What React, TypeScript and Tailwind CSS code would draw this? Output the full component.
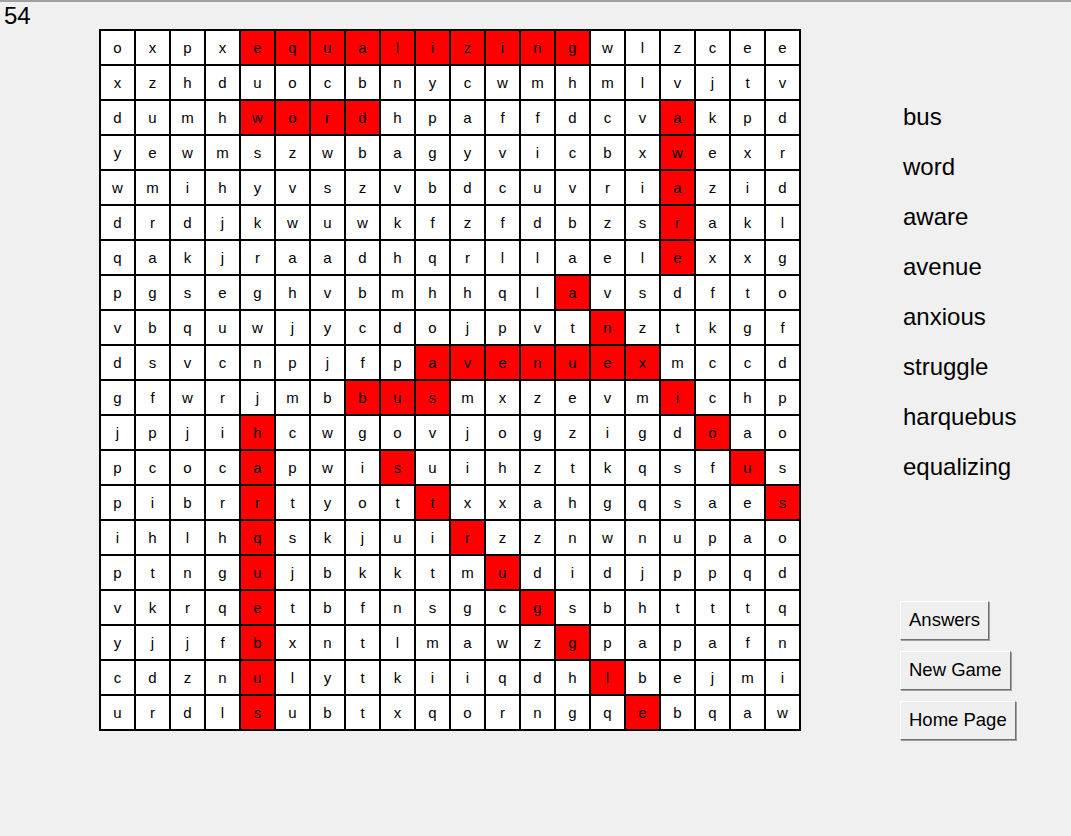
import React from "react";

const rows = [
  "oxpxequalizingwlzcee",
  "xzhduocbnycwmhmlvjtv",
  "dumhwordhpaffdcvakpd",
  "yewmszwbagyvicbxwexr",
  "wmihyvszvbdcuvriazid",
  "drdjkwuwkfzfdbzsrakl",
  "qakjraadhqrllaelexxg",
  "pgseghvbmhhqlavsdfto",
  "vbquwjycdojpvtnztkgf",
  "dsvcnpjfpavenuexmccd",
  "gfwrjmbbusmxzevmichp",
  "jpjihcwgovjogzigdoao",
  "pcocapwisuihztkqsfus",
  "pibrrtyottxxahgqsaes",
  "ihlhqskjuirzznwnupao",
  "ptngujbkktmudidjppqd",
  "vkrqetbfnsgcgsbhtttq",
  "yjjfbxntlmawzgpapafn",
  "cdznulytkiiqdhlbejmi",
  "urdlsubtxqorngqebqaw",
];

// found words, as [row, col] cells
const found: [number, number][] = [];
for (let c = 4; c <= 13; c++) found.push([0, c]); // equalizing
for (let c = 4; c <= 7; c++) found.push([2, c]); // word
for (let r = 2; r <= 6; r++) found.push([r, 16]); // aware
for (let c = 9; c <= 15; c++) found.push([9, c]); // avenue
for (let c = 7; c <= 9; c++) found.push([10, c]); // bus
for (let i = 0; i < 7; i++) found.push([7 + i, 13 + i]); // anxious
for (let i = 0; i < 8; i++) found.push([12 + i, 8 + i]); // struggle
for (let r = 11; r <= 19; r++) found.push([r, 4]); // harquebus

const hit = new Set(found.map(([r, c]) => r * 20 + c));

const words = ["bus", "word", "aware", "avenue", "anxious", "struggle", "harquebus", "equalizing"];

function Btn({ label }: { label: string }) {
  return (
    <button className="h-[39px] px-[8px] bg-[#efefef] border border-t-white border-l-white border-b-[#707070] border-r-[#707070] shadow-[1px_1px_0_#a0a0a0] text-[18.5px] text-black leading-none self-start">
      {label}
    </button>
  );
}

export default function App() {
  return (
    <div
      className="min-h-screen bg-[#f0f0f0] border-t-2 border-[#a0a0a0] text-black"
      style={{ fontFamily: '"Liberation Sans", Arial, sans-serif' }}
    >
      <div className="pl-[4px] h-[27px] text-[24px] leading-[27px]">54</div>
      <div className="flex items-start pl-[99px]">
        <div className="grid grid-cols-[repeat(20,33px)] grid-rows-[repeat(20,33px)] gap-[2px] p-[2px] bg-black">
          {rows.map((row, r) =>
            row.split("").map((ch, c) => (
              <div
                key={r * 20 + c}
                className={
                  "flex items-center justify-center text-[15px] pt-[1px] " +
                  (hit.has(r * 20 + c) ? "bg-[#ff0000]" : "bg-white")
                }
              >
                {ch}
              </div>
            ))
          )}
        </div>
        <div className="ml-[99px] pt-[63px] flex flex-col">
          <div className="pl-[3px] flex flex-col">
            {words.map((w) => (
              <div key={w} className="text-[24px] leading-[50px] h-[50px]">
                {w}
              </div>
            ))}
          </div>
          <div className="mt-[109px] flex flex-col gap-[11px]">
            <Btn label="Answers" />
            <Btn label="New Game" />
            <Btn label="Home Page" />
          </div>
        </div>
      </div>
    </div>
  );
}
